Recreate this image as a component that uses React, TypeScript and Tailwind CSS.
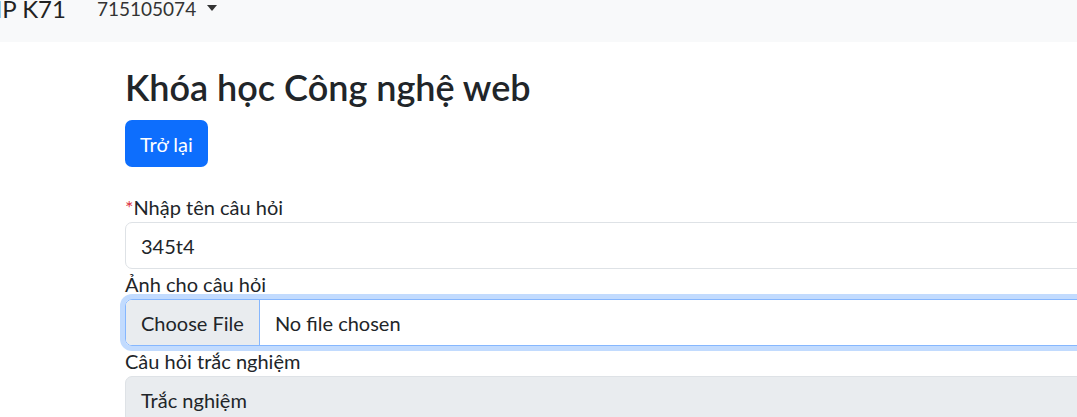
export default function App() {
    return (
        <div
            className="w-[1077px] h-[417px] overflow-hidden bg-white text-[#212529]"
            style={{ fontFamily: 'Lato, "Segoe UI", sans-serif' }}
        >
            {/* navbar, page is scrolled so the top and left are cut off */}
            <div className="h-[42px] bg-[#f8f9fa] flex items-center pb-[24px] w-[1400px]">
                <span className="ml-[-16px] text-[24px] leading-[36px] text-[#222]">HP K71</span>
                <div className="ml-[31px] flex items-center text-[19px] leading-[30px] text-[#333]">
                    <span>715105074</span>
                    <span className="ml-[11px] mt-[-2px] w-0 h-0 border-t-[6px] border-t-current border-x-[5.5px] border-x-transparent" />
                </div>
            </div>

            <div className="pl-[125px] pt-[20px] w-[1400px]">
                <h1 className="text-[36px] leading-[48px] font-semibold mb-[10px] pt-[1px] h-[48px]">Khóa học Công nghệ web</h1>
                <button className="h-[47px] px-[15px] text-[20px] leading-[30px] text-white bg-[#0d6efd] rounded-[7px]">
                    Trở lại
                </button>

                <form className="mt-[25px]">
                    <label className="block text-[20px] leading-[30px]">
                        <span className="text-[#dc3545]">*</span>Nhập tên câu hỏi
                    </label>
                    <div className="h-[47px] border border-[#dee2e6] rounded-[7px] px-[15px] flex items-center text-[20px]">
                        345t4
                    </div>

                    <label className="block text-[20px] leading-[30px]">Ảnh cho câu hỏi</label>
                    <div className="h-[47px] border border-[#86b7fe] rounded-[7px] flex items-stretch text-[20px] shadow-[0_0_0_5px_rgba(13,110,253,0.25)] overflow-hidden">
                        <div className="px-[15px] bg-[#e9ecef] border-r border-[#86b7fe] flex items-center">Choose File</div>
                        <div className="px-[15px] flex items-center">No file chosen</div>
                    </div>

                    <label className="block text-[20px] leading-[30px]">Câu hỏi trắc nghiệm</label>
                    <div className="h-[47px] border border-[#dee2e6] bg-[#e9ecef] rounded-[7px] px-[15px] flex items-center text-[20px]">
                        Trắc nghiệm
                    </div>
                </form>
            </div>
        </div>
    );
}
